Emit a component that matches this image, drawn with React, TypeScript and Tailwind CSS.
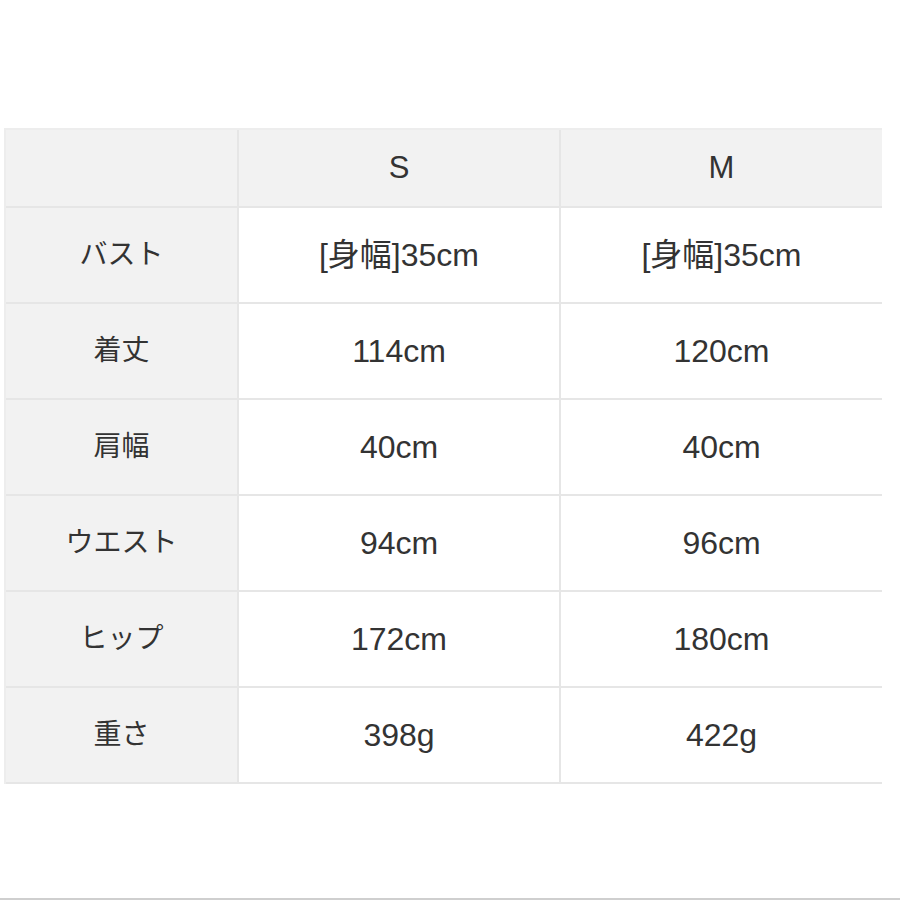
import React from "react";

const rows: [string, string, string][] = [
  ["バスト", "[身幅]35cm", "[身幅]35cm"],
  ["着丈", "114cm", "120cm"],
  ["肩幅", "40cm", "40cm"],
  ["ウエスト", "94cm", "96cm"],
  ["ヒップ", "172cm", "180cm"],
  ["重さ", "398g", "422g"],
];

const font = {
  fontFamily: '"Liberation Sans", "Noto Sans CJK JP", sans-serif',
};

export default function App() {
  return (
    <div className="w-[900px] h-[900px] bg-white flex flex-col text-[#333]" style={font}>
      <div className="pt-[128px] pl-[4px]">
        <div className="grid grid-cols-[233px_322px_321px] w-fit border-t-2 border-l-2 border-[#ededed]">
          <div className="h-[78px] bg-[#f2f2f2] border-r-2 border-b-2 border-[#e6e6e6]" />
          <div className="h-[78px] bg-[#f2f2f2] border-r-2 border-b-2 border-[#e6e6e6] flex items-center justify-center text-[31px]">
            S
          </div>
          <div className="h-[78px] bg-[#f2f2f2] border-b-2 border-[#e6e6e6] flex items-center justify-center text-[31px]">
            M
          </div>
          {rows.map(([label, s, m]) => (
            <React.Fragment key={label}>
              <div className="h-[96px] bg-[#f2f2f2] border-r-2 border-b-2 border-[#e6e6e6] flex items-center justify-center text-[28px]">
                {label}
              </div>
              <div className="h-[96px] bg-white border-r-2 border-b-2 border-[#e6e6e6] flex items-center justify-center text-[32px]">
                {s}
              </div>
              <div className="h-[96px] bg-white border-b-2 border-[#e6e6e6] flex items-center justify-center text-[32px]">
                {m}
              </div>
            </React.Fragment>
          ))}
        </div>
      </div>
      <div className="mt-auto h-[2px] bg-[#cfcfcf]" />
    </div>
  );
}
